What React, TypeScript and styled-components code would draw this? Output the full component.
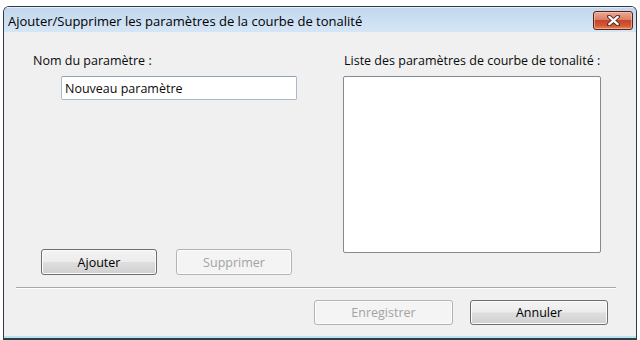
import React from "react";
import styled, { createGlobalStyle } from "styled-components";

const Global = createGlobalStyle`
  html, body { margin: 0; padding: 0; background: #ffffff; }
  body {
    width: 640px;
    height: 340px;
    overflow: hidden;
    font-family: "Open Sans", "Noto Sans", "DejaVu Sans", sans-serif;
    font-size: 12.5px;
    color: #0a0a0a;
  }
`;

const Window = styled.div`
  margin: 6px 0 0 3px;
  width: 634px;
  height: 334px;
  box-sizing: border-box;
  border: 1px solid #2f3b49;
  border-bottom-width: 2px;
  border-radius: 6px 6px 0 0;
  background: #c8dcf0;
  display: flex;
  flex-direction: column;
  overflow: hidden;
`;

const TitleBar = styled.div`
  height: 25px;
  flex: none;
  display: flex;
  align-items: flex-start;
  justify-content: space-between;
  padding: 0 3px 0 4px;
  background: linear-gradient(to bottom, #c1d6ed 0%, #cde0f3 60%, #d5e5f5 100%);
  box-shadow: inset 0 1px 0 #e4eef9;
`;

const Title = styled.div`
  line-height: 16px;
  margin-top: 6px;
  font-size: 13px;
  color: #000;
  white-space: nowrap;
`;

const CloseButton = styled.div`
  margin-top: 4px;
  width: 40px;
  height: 19px;
  box-sizing: border-box;
  border: 1px solid #5a2016;
  border-radius: 3px;
  background: linear-gradient(
    to bottom,
    #eaa994 0%,
    #dc7f66 45%,
    #c7432a 50%,
    #cf5a34 80%,
    #e08a57 100%
  );
  box-shadow: inset 0 0 0 1px rgba(255, 210, 190, 0.55);
  display: flex;
  align-items: center;
  justify-content: center;
`;

const Body = styled.div`
  flex: 1;
  background: #f0f0f0;
  border-bottom: 2px solid #b9e3ef;
  padding: 21px 20px 0 12px;
  display: flex;
  flex-direction: column;
`;

const Columns = styled.div`
  margin-left: 17px;
  display: grid;
  grid-template-columns: 264px 258px;
  column-gap: 46px;
  align-items: start;
`;

const Column = styled.div`
  display: flex;
  flex-direction: column;
`;

const Label = styled.div<{ $indent?: number }>`
  line-height: 16px;
  height: 16px;
  padding-left: ${(p) => p.$indent ?? 0}px;
  white-space: nowrap;
  color: #0a0a0a;
`;

const TextInput = styled.input`
  margin: 7px 0 0 28px;
  width: 236px;
  height: 24px;
  box-sizing: border-box;
  border: 1px solid #abb8c8;
  border-top-color: #8da0b8;
  border-radius: 2px;
  background: #ffffff;
  padding: 0 3px;
  font-family: inherit;
  font-size: 12.5px;
  color: #0a0a0a;
  outline: none;
`;

const ListBox = styled.div`
  margin-top: 7px;
  height: 177px;
  box-sizing: border-box;
  border: 1px solid #848a93;
  border-radius: 2px;
  background: #ffffff;
`;

const ButtonRow = styled.div<{ $gap: number }>`
  display: flex;
  gap: ${(p) => p.$gap}px;
`;

const LeftButtons = styled(ButtonRow)`
  margin: 149px 0 0 8px;
`;

const BottomButtons = styled(ButtonRow)`
  margin-top: 11px;
  padding-right: 8px;
  justify-content: flex-end;
`;

const Button = styled.button<{ $w: number; $h: number }>`
  width: ${(p) => p.$w}px;
  height: ${(p) => p.$h}px;
  box-sizing: border-box;
  border: 1px solid #6e6e6e;
  border-radius: 3px;
  padding: 0;
  font-family: inherit;
  font-size: 12.5px;
  color: #000;
  background: linear-gradient(
    to bottom,
    #f4f4f4 0%,
    #ececec 48%,
    #dedede 52%,
    #d0d0d0 100%
  );
  box-shadow: inset 0 0 0 1px #fbfbfb;

  &:disabled {
    border-color: #b0b4b8;
    color: #a3a3a3;
    background: #f4f4f4;
    box-shadow: inset 0 0 0 1px #fcfcfc;
  }
`;

const Separator = styled.div`
  margin-top: 12px;
  height: 1px;
  background: #a7a7a7;
  border-bottom: 1px solid #ffffff;
`;

export default function App() {
  return (
    <>
      <Global />
      <Window>
        <TitleBar>
          <Title>Ajouter/Supprimer les paramètres de la courbe de tonalité</Title>
          <CloseButton>
            <svg width="13" height="11" viewBox="0 0 13 11">
              <path
                d="M2 1.5 L11 9.5 M11 1.5 L2 9.5"
                stroke="#5a2a22"
                strokeWidth="4"
                strokeLinecap="round"
              />
              <path
                d="M2.3 1.8 L10.7 9.2 M10.7 1.8 L2.3 9.2"
                stroke="#ffffff"
                strokeWidth="2.2"
                strokeLinecap="round"
              />
            </svg>
          </CloseButton>
        </TitleBar>
        <Body>
          <Columns>
            <Column>
              <Label>Nom du paramètre :</Label>
              <TextInput defaultValue="Nouveau paramètre" />
              <LeftButtons $gap={19}>
                <Button $w={116} $h={26}>Ajouter</Button>
                <Button $w={116} $h={26} disabled>
                  Supprimer
                </Button>
              </LeftButtons>
            </Column>
            <Column>
              <Label $indent={1}>Liste des paramètres de courbe de tonalité :</Label>
              <ListBox />
            </Column>
          </Columns>
          <Separator />
          <BottomButtons $gap={17}>
            <Button $w={139} $h={25} disabled>
              Enregistrer
            </Button>
            <Button $w={138} $h={25}>Annuler</Button>
          </BottomButtons>
        </Body>
      </Window>
    </>
  );
}
